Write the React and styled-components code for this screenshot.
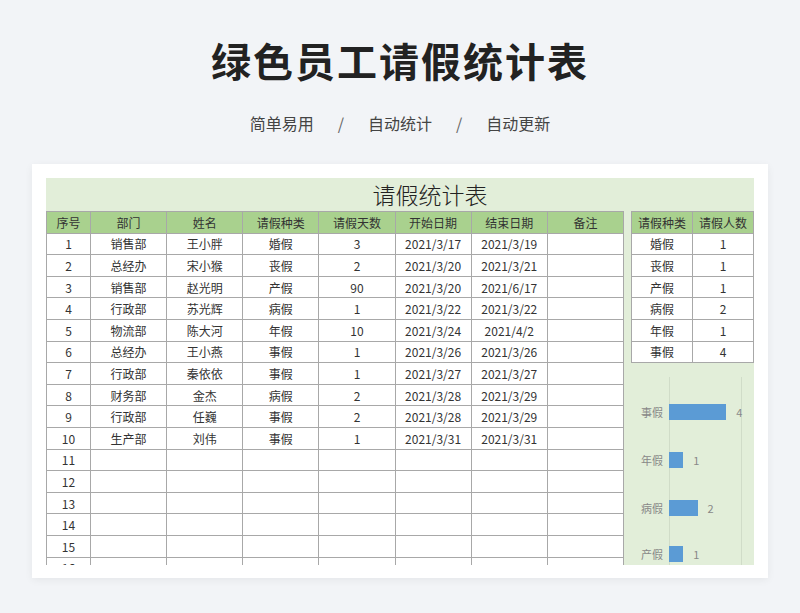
import styled, { createGlobalStyle } from "styled-components";

const Global = createGlobalStyle`
  body { margin: 0; background: #f2f4f7; font-family: "Noto Sans CJK SC", "Noto Sans", sans-serif; }
`;

const Page = styled.div`
  width: 800px; height: 613px; display: flex; flex-direction: column; align-items: center; overflow: hidden;
`;
const Title = styled.h1`
  margin: 32px 0 0; font-size: 40px; font-weight: 700; color: #222; letter-spacing: 2px; line-height: 56px;
`;
const Sub = styled.div`
  margin-top: 24px; font-size: 16px; color: #444; display: flex; gap: 24px; line-height: 22px;
`;
const Slash = styled.span` color: #666; `;
const Card = styled.div`
  margin-top: 30px; width: 708px; background: #fff; padding: 14px 14px 13px;
  box-shadow: 0 2px 8px rgba(0,0,0,0.06);
`;
const Sheet = styled.div`
  background: #e2eed9; height: 387px; overflow: hidden;
`;
const SheetTitle = styled.div`
  height: 33px; text-align: center; font-size: 23px; font-weight: 300; color: #222; line-height: 33px; padding-left: 60px;
`;
const Body = styled.div` display: flex; gap: 7px; align-items: flex-start; `;
const Table = styled.table`
  border-collapse: collapse; table-layout: fixed; font-size: 12px; color: #333;
  td, th { border: 1px solid #a8a8a8; height: 20.6px; padding: 0; text-align: center; font-weight: 400; }
  th { background: #a9d18e; }
  td { background: #fff; }
`;
const Side = styled.div` display: flex; flex-direction: column; `;
const Chart = styled.div`
  position: relative; height: 200px; margin-top: 14px; width: 122px;
`;
const Axis = styled.div`
  position: absolute; top: 0; bottom: 0; left: ${p => p.$x}px; width: 1px; background: #d0dcc8;
`;
const BarRow = styled.div`
  position: absolute; left: 0; top: ${p => p.$y}px; display: flex; align-items: center; font-size: 11px; color: #888;
`;
const BarLabel = styled.span` width: 28px; padding-left: 10px; `;
const Bar = styled.div` height: 16px; background: #5b9bd5; margin-right: 10px; `;

const cols = [44, 76, 76, 76, 76, 76, 76, 76];
const heads = ["序号", "部门", "姓名", "请假种类", "请假天数", "开始日期", "结束日期", "备注"];
const data = [
  ["销售部", "王小胖", "婚假", "3", "2021/3/17", "2021/3/19"],
  ["总经办", "宋小猴", "丧假", "2", "2021/3/20", "2021/3/21"],
  ["销售部", "赵光明", "产假", "90", "2021/3/20", "2021/6/17"],
  ["行政部", "苏光辉", "病假", "1", "2021/3/22", "2021/3/22"],
  ["物流部", "陈大河", "年假", "10", "2021/3/24", "2021/4/2"],
  ["总经办", "王小燕", "事假", "1", "2021/3/26", "2021/3/26"],
  ["行政部", "秦依依", "事假", "1", "2021/3/27", "2021/3/27"],
  ["财务部", "金杰", "病假", "2", "2021/3/28", "2021/3/29"],
  ["行政部", "任巍", "事假", "2", "2021/3/28", "2021/3/29"],
  ["生产部", "刘伟", "事假", "1", "2021/3/31", "2021/3/31"],
];
const summary = [["婚假", 1], ["丧假", 1], ["产假", 1], ["病假", 2], ["年假", 1], ["事假", 4]];
const bars = [["事假", 4, 27], ["年假", 1, 75], ["病假", 2, 123], ["产假", 1, 169]];

export default function App() {
  return (
    <Page>
      <Global />
      <Title>绿色员工请假统计表</Title>
      <Sub><span>简单易用</span><Slash>/</Slash><span>自动统计</span><Slash>/</Slash><span>自动更新</span></Sub>
      <Card>
        <Sheet>
          <SheetTitle>请假统计表</SheetTitle>
          <Body>
            <Table style={{ width: 578 }}>
              <colgroup>{cols.map((w, i) => <col key={i} style={{ width: w }} />)}</colgroup>
              <thead><tr>{heads.map(h => <th key={h}>{h}</th>)}</tr></thead>
              <tbody>
                {Array.from({ length: 17 }, (_, i) => {
                  const r = data[i] || ["", "", "", "", "", ""];
                  return (
                    <tr key={i}>
                      <td>{i + 1}</td>
                      {r.map((c, j) => <td key={j}>{c}</td>)}
                      <td></td>
                    </tr>
                  );
                })}
              </tbody>
            </Table>
            <Side>
              <Table style={{ width: 122 }}>
                <colgroup><col style={{ width: 61 }} /><col style={{ width: 61 }} /></colgroup>
                <thead><tr><th>请假种类</th><th>请假人数</th></tr></thead>
                <tbody>{summary.map(([k, v]) => <tr key={k}><td>{k}</td><td>{v}</td></tr>)}</tbody>
              </Table>
              <Chart>
                <Axis $x={38} />
                <Axis $x={110} />
                {bars.map(([k, v, y]) => (
                  <BarRow key={k} $y={y}>
                    <BarLabel>{k}</BarLabel>
                    <Bar style={{ width: v * 14.3 }} />
                    <span>{v}</span>
                  </BarRow>
                ))}
              </Chart>
            </Side>
          </Body>
        </Sheet>
      </Card>
    </Page>
  );
}
